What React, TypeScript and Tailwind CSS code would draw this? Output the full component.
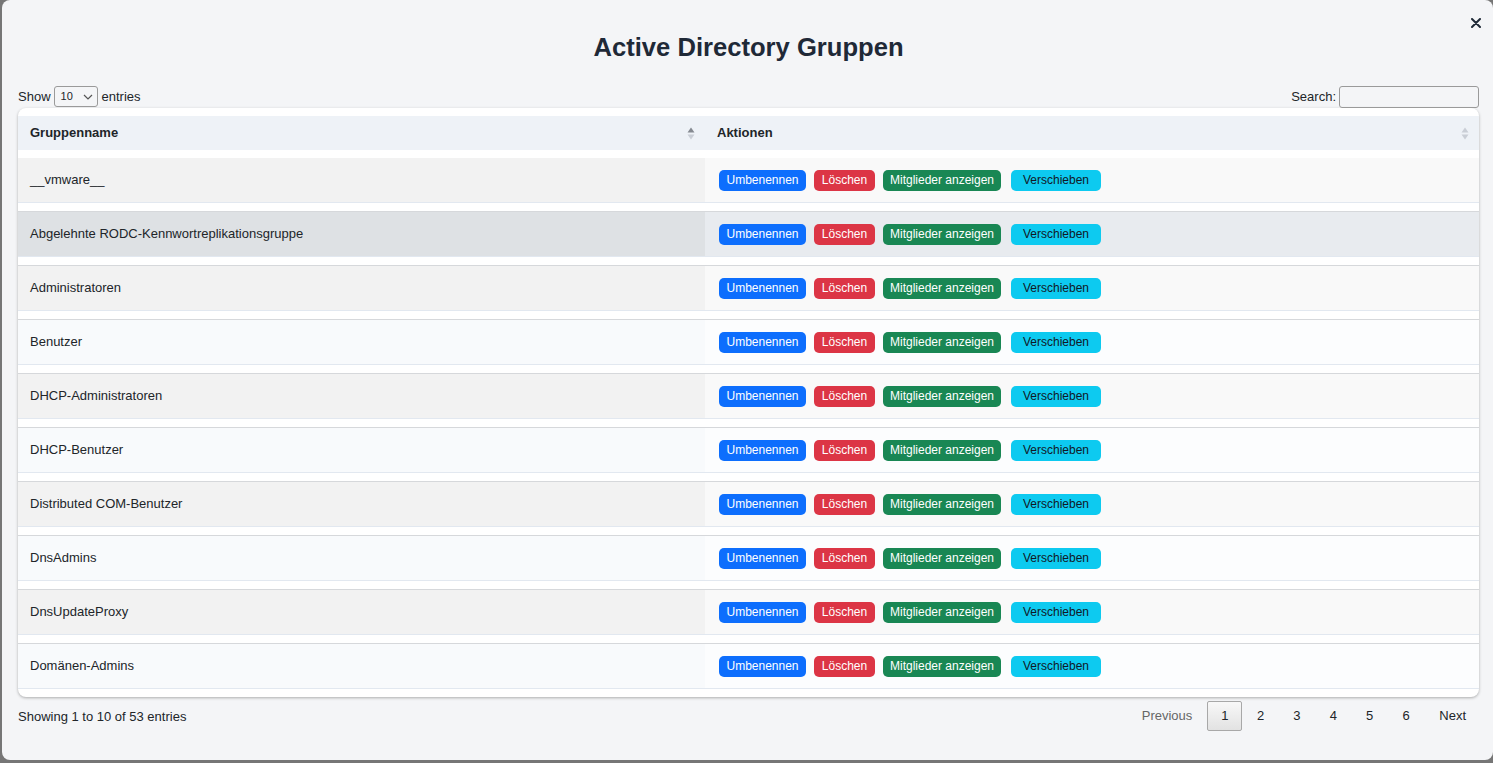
import React from "react";

const groups = [
  "__vmware__",
  "Abgelehnte RODC-Kennwortreplikationsgruppe",
  "Administratoren",
  "Benutzer",
  "DHCP-Administratoren",
  "DHCP-Benutzer",
  "Distributed COM-Benutzer",
  "DnsAdmins",
  "DnsUpdateProxy",
  "Domänen-Admins",
];

function SortIcon({ active }: { active?: boolean }) {
  return (
    <svg width="8" height="13" viewBox="0 0 8 13" className="shrink-0">
      <path d="M4 0.5 L7.5 5.5 L0.5 5.5 Z" fill={active ? "#858a91" : "#c9ced6"} />
      <path d="M4 12.5 L7.5 7.5 L0.5 7.5 Z" fill="#c9ced6" />
    </svg>
  );
}

function ActionButtons() {
  return (
    <div className="flex items-center">
      <button className="w-[87px] h-[21px] rounded-[5px] bg-[#0d6efd] text-white text-[12px] leading-none">
        Umbenennen
      </button>
      <button className="ml-[8px] w-[61px] h-[21px] rounded-[5px] bg-[#dc3545] text-white text-[12px] leading-none">
        Löschen
      </button>
      <button className="ml-[8px] w-[118px] h-[21px] rounded-[5px] bg-[#198754] text-white text-[12px] leading-none">
        Mitglieder anzeigen
      </button>
      <button className="ml-[10px] w-[90px] h-[21px] rounded-[5px] bg-[#0dcaf0] text-[#111827] text-[12px] leading-none">
        Verschieben
      </button>
    </div>
  );
}

export default function App() {
  return (
    <div
      className="h-screen w-full bg-[#767676] pl-[2px] pb-[3px] overflow-hidden text-[#212529]"
      style={{ fontFamily: '"Liberation Sans", Arial, sans-serif' }}
    >
      <div className="relative h-full rounded-lg bg-[#f4f5f7] pl-4 pr-[14px] pt-[31px]">
        {/* Close */}
        <button className="absolute top-[18px] right-[12px]">
          <svg width="10" height="10" viewBox="0 0 10 10">
            <path d="M1 1 L9 9 M9 1 L1 9" stroke="#1f2937" strokeWidth="2" strokeLinecap="round" />
          </svg>
        </button>

        {/* Title */}
        <h1 className="h-8 text-center text-[25.6px] leading-8 font-bold text-[#1f2937]">
          Active Directory Gruppen
        </h1>

        {/* Controls */}
        <div className="mt-[23px] flex h-[22px] items-start justify-between text-[13px]">
          <div className="flex items-center h-[21px]">
            <span>Show</span>
            <div className="ml-[3px] flex h-[21px] w-[44px] items-center justify-between rounded-[3px] border border-[#9a9a9a] pl-[6px] pr-[4px] text-[11px]">
              <span>10</span>
              <svg width="10" height="6" viewBox="0 0 10 6">
                <path d="M1 1 L5 5 L9 1" fill="none" stroke="#555" strokeWidth="1.2" />
              </svg>
            </div>
            <span className="ml-[4px]">entries</span>
          </div>
          <div className="flex items-center h-[21px]">
            <span>Search:</span>
            <div className="ml-[3px] h-[22px] w-[140px] rounded-[3px] border border-[#9a9a9a]" />
          </div>
        </div>

        {/* Table */}
        <div className="rounded-lg bg-white pt-2 pb-2 shadow-[0_1px_3px_rgba(0,0,0,0.3)]">
          <div className="flex h-[34px] bg-[#eef2f7] text-[13px] font-bold">
            <div className="flex w-[687px] items-center justify-between pl-3 pr-[10px]">
              <span>Gruppenname</span>
              <SortIcon active />
            </div>
            <div className="flex flex-1 items-center justify-between pl-3 pr-[10px]">
              <span>Aktionen</span>
              <SortIcon />
            </div>
          </div>

          {groups.map((g, i) => {
            const odd = i % 2 === 0;
            const hover = i === 1;
            const c1 = hover ? "bg-[#dee1e4]" : odd ? "bg-[#f2f2f2]" : "bg-[#f8fafc]";
            const c2 = hover ? "bg-[#e8ebef]" : odd ? "bg-[#f9f9f9]" : "bg-[#fcfdfe]";
            return (
              <div
                key={g}
                className={`flex h-[46px] border-t border-b border-b-[#e2e8f0] text-[13px] ${
                  i === 0 ? "mt-[7px] border-t-white" : "mt-2 border-t-[#d6d8db]"
                }`}
              >
                <div className={`flex w-[687px] items-center pl-3 ${c1}`}>{g}</div>
                <div className={`flex flex-1 items-center pl-[14px] ${c2}`}>
                  <ActionButtons />
                </div>
              </div>
            );
          })}
        </div>

        {/* Footer */}
        <div className="mt-[4px] flex items-start justify-between text-[13px]">
          <div className="mt-[6px]">Showing 1 to 10 of 53 entries</div>
          <div className="flex items-center h-[30px] pr-[13px]">
            <span className="mr-[15px] text-[#666]">Previous</span>
            <span className="flex h-[30px] w-[35px] items-center justify-center rounded-[2px] border border-[#a8a8a8] bg-gradient-to-b from-[#f8f8f8] to-[#e2e2e2]">
              1
            </span>
            {[2, 3, 4, 5, 6].map((n) => (
              <span key={n} className="flex h-[30px] w-[36.4px] items-center justify-center">
                {n}
              </span>
            ))}
            <span className="ml-[15px]">Next</span>
          </div>
        </div>
      </div>
    </div>
  );
}
